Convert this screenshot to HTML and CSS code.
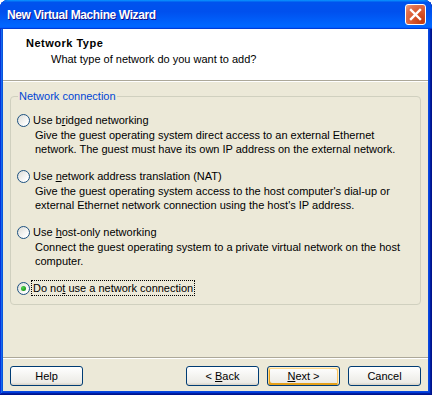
FILE: index.html
```html
<!DOCTYPE html>
<html lang="en">
<head>
  <meta charset="UTF-8" />
  <title>New Virtual Machine Wizard</title>
  <link rel="stylesheet" href="styles.css">
</head>
<body>

  <div class="window">
    <div class="titlebar">
      <span class="title">New Virtual Machine Wizard</span>
      <button class="close" aria-label="Close">
        <svg width="13" height="13" viewBox="0 0 13 13">
          <path d="M2 2 L11 11 M11 2 L2 11" stroke="#fff" stroke-width="2.4" stroke-linecap="square" />
        </svg>
      </button>
    </div>

    <div class="client">
      <div class="header">
        <h1>Network Type</h1>
        <p>What type of network do you want to add?</p>
      </div>
      <div class="separator"></div>

      <div class="content">
        <fieldset class="group">
          <legend>Network connection</legend>

          <label class="option">
            <input type="radio" name="net" />
            <span class="label-text">Use b<u>r</u>idged networking</span>
          </label>
          <p class="desc">Give the guest operating system direct access to an external Ethernet<br>network. The guest must have its own IP address on the external network.</p>

          <label class="option">
            <input type="radio" name="net" />
            <span class="label-text">Use <u>n</u>etwork address translation (NAT)</span>
          </label>
          <p class="desc">Give the guest operating system access to the host computer's dial-up or<br>external Ethernet network connection using the host's IP address.</p>

          <label class="option">
            <input type="radio" name="net" />
            <span class="label-text">Use <u>h</u>ost-only networking</span>
          </label>
          <p class="desc">Connect the guest operating system to a private virtual network on the host<br>computer.</p>

          <label class="option focused">
            <input type="radio" name="net" checked />
            <span class="label-text">Do no<u>t</u> use a network connection</span>
          </label>
        </fieldset>
      </div>

      <div class="separator"></div>
      <div class="footer">
        <button class="btn">Help</button>
        <div class="nav">
          <button class="btn">&lt; <u>B</u>ack</button>
          <button class="btn default"><u>N</u>ext &gt;</button>
          <button class="btn">Cancel</button>
        </div>
      </div>
    </div>
  </div>

</body>
</html>
```

FILE: styles.css
```css
* {
  box-sizing: border-box;
}

body {
  margin: 0;
  background: #ffffff;
  font-family: 'Liberation Sans', Arial, sans-serif;
  font-size: 11px;
  color: #000;
}

.window {
  width: 432px;
  height: 395px;
  display: flex;
  flex-direction: column;
  background: #0a48dc;
  border-radius: 8px 8px 0 0;
  box-shadow: inset -1px -1px #00138c, inset 1px 1px #0831d9,
    inset -2px -2px #001ea0, inset 2px 2px #166aee,
    inset -3px -3px #003bda, inset 3px 3px #0855dd;
}

.titlebar {
  height: 29px;
  flex: none;
  display: flex;
  align-items: center;
  justify-content: space-between;
  padding: 0 6px 0 7px;
  border-radius: 8px 8px 0 0;
  background: linear-gradient(180deg, #0997ff, #0053ee 8%, #0050ee 40%, #0066ff 88%, #0066ff 93%, #005bff 95%, #003dd7 96%, #003dd7);
}

.title {
  font-family: 'Liberation Sans', Arial, sans-serif;
  font-weight: bold;
  font-size: 12px;
  color: #fff;
  text-shadow: 1px 1px #0f1089;
  letter-spacing: -0.4px;
}

.close {
  width: 21px;
  height: 21px;
  padding: 0;
  display: flex;
  align-items: center;
  justify-content: center;
  border: 1px solid #fff;
  border-radius: 3px;
  background: radial-gradient(circle at 85% 85%, #c43a10 0, #d9582f 45%, #e2714f 75%, #f0a58a 100%);
}

.client {
  flex: 1;
  display: flex;
  flex-direction: column;
  margin: 0 4px 4px 3px;
  background: #ece9d8;
}

.header {
  height: 51px;
  flex: none;
  background: #fff;
  padding: 7px 0 0 23px;
}

.header h1 {
  margin: 0;
  font-size: 11px;
  font-weight: bold;
  line-height: 14px;
  letter-spacing: 0.5px;
}

.header p {
  margin: 2px 0 0 25px;
  line-height: 14px;
}

.separator {
  flex: none;
  border-top: 1px solid #aca899;
  border-bottom: 1px solid #fff;
}

.content {
  flex: 1;
  padding: 8px 7px 0 7px;
}

.group {
  margin: 0;
  padding: 9px 6px 8px 6px;
  border: 1px solid #d0d0bf;
  border-radius: 4px;
}

.group legend {
  padding: 0 1px;
  margin-left: 1px;
  color: #0046d5;
  line-height: 13px;
}

.option {
  display: flex;
  align-items: center;
  height: 16px;
}

.option input {
  appearance: none;
  -webkit-appearance: none;
  width: 13px;
  height: 13px;
  margin: 0;
  flex: none;
  border: 1px solid #1c5180;
  border-radius: 50%;
  background: linear-gradient(135deg, #dcdcd7, #ffffff 80%);
  display: flex;
  align-items: center;
  justify-content: center;
}

.option input:checked::after {
  content: '';
  width: 5px;
  height: 5px;
  border-radius: 50%;
  background: radial-gradient(circle at 35% 35%, #55d551, #21a121 60%, #0e8a0e);
}

.label-text {
  margin-left: 2px;
  line-height: 14px;
  padding: 0 1px;
}

.option.focused .label-text {
  outline: 1px dotted #000;
  outline-offset: 0;
}

.desc {
  margin: 0 0 12px 18px;
  line-height: 14px;
}

.footer {
  height: 32px;
  flex: none;
  display: flex;
  justify-content: space-between;
  padding: 7px 7px 0 7px;
}

.nav {
  display: flex;
  gap: 8px;
}

.btn {
  width: 73px;
  height: 20px;
  padding: 0;
  font-family: inherit;
  font-size: 11px;
  color: #000;
  border: 1px solid #003c74;
  border-radius: 3px;
  background: linear-gradient(180deg, #ffffff, #ecebe6 86%, #d6d0c5);
}

.btn.default {
  box-shadow: inset -1px 1px #fff0cf, inset 1px 2px #fdd889,
    inset -2px 2px #fbc761, inset 2px -2px #e5a01a;
}
```
